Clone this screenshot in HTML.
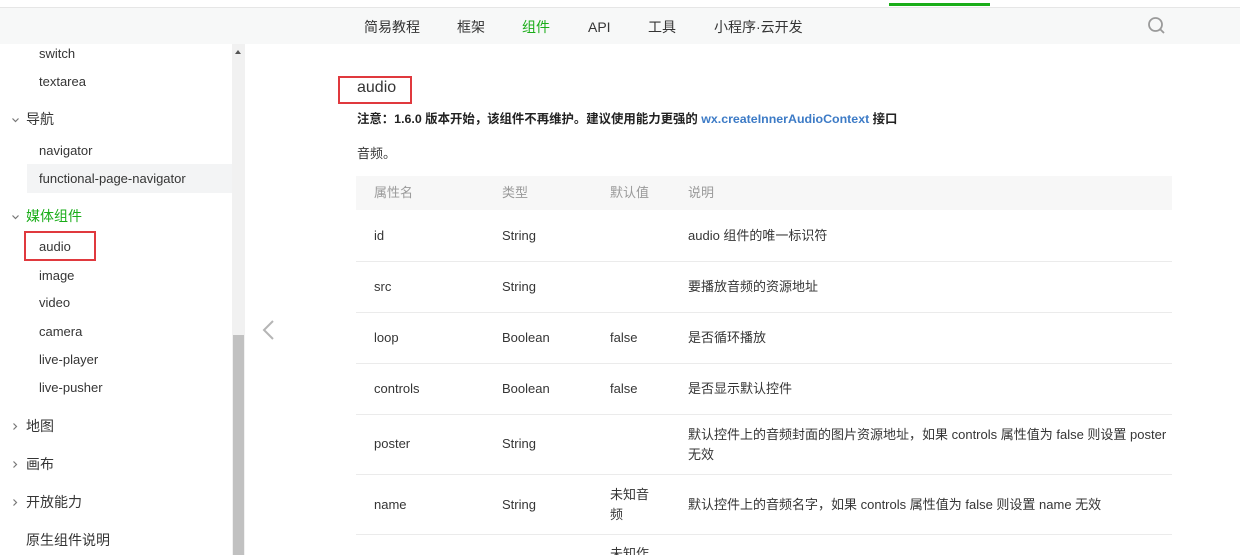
<!DOCTYPE html>
<html><head><meta charset="utf-8"><style>
*{margin:0;padding:0;box-sizing:border-box}
html,body{width:1240px;height:555px;overflow:hidden}
body{background:#fff;font-family:"Liberation Sans","Noto Sans CJK SC",sans-serif;color:#353535;position:relative}
.a{position:absolute;white-space:nowrap;line-height:18px}
.hdr{position:absolute;left:0;top:7px;width:1240px;height:37px;background:#f7f8f8;border-top:1px solid #e6e6e6}
.nav{font-size:14px;color:#353535;top:17px;line-height:20px}
.sb{font-size:13px;color:#353535}
.cat{font-size:14px;color:#353535;line-height:20px}
.td{font-size:13px;color:#353535}
.th{font-size:13px;color:#9a9a9a}
.line{position:absolute;left:356px;width:816px;height:1px;background:#ebebeb}
.chev{position:absolute;left:11px}
</style></head><body>
<div class="a" style="left:889px;top:3px;width:101px;height:3px;background:#1aad19"></div>
<div class="hdr"></div>
<div class="a nav" style="left:364px">简易教程</div>
<div class="a nav" style="left:457px">框架</div>
<div class="a nav" style="left:522px;color:#1aad19">组件</div>
<div class="a nav" style="left:588px">API</div>
<div class="a nav" style="left:648px">工具</div>
<div class="a nav" style="left:714px">小程序·云开发</div>
<svg class="a" style="left:1147px;top:16px" width="20" height="20" viewBox="0 0 20 20"><circle cx="8.5" cy="8.5" r="6.5" fill="none" stroke="#9a9a9a" stroke-width="1.8"/><path d="M13.2 13.2L17 17" stroke="#9a9a9a" stroke-width="1.8"/></svg>

<div class="a" style="left:232px;top:44px;width:13px;height:511px;background:#f1f1f1"></div>
<div class="a" style="left:233px;top:335px;width:11px;height:220px;background:#c1c1c1"></div>
<div class="a" style="left:235px;top:50px;width:0;height:0;border-left:3.5px solid transparent;border-right:3.5px solid transparent;border-bottom:4px solid #555"></div>
<div class="a" style="left:27px;top:164px;width:205px;height:29px;background:#f3f4f5"></div>
<div class="a sb" style="left:39px;top:45px">switch</div>
<div class="a sb" style="left:39px;top:73px">textarea</div>
<svg class="chev" style="top:116px" width="9" height="8" viewBox="0 0 9 8"><path d="M1.5 2.5L4.5 5.5L7.5 2.5" fill="none" stroke="#777" stroke-width="1.2"/></svg>
<div class="a cat" style="left:26px;top:109px">导航</div>
<div class="a sb" style="left:39px;top:142px">navigator</div>
<div class="a sb" style="left:39px;top:170px">functional-page-navigator</div>
<svg class="chev" style="top:213px" width="9" height="8" viewBox="0 0 9 8"><path d="M1.5 2.5L4.5 5.5L7.5 2.5" fill="none" stroke="#777" stroke-width="1.2"/></svg>
<div class="a cat" style="left:26px;top:206px;color:#1aad19">媒体组件</div>
<div class="a" style="left:24px;top:231px;width:72px;height:30px;border:2px solid #e0393e"></div>
<div class="a sb" style="left:39px;top:238px">audio</div>
<div class="a sb" style="left:39px;top:267px">image</div>
<div class="a sb" style="left:39px;top:294px">video</div>
<div class="a sb" style="left:39px;top:323px">camera</div>
<div class="a sb" style="left:39px;top:351px">live-player</div>
<div class="a sb" style="left:39px;top:379px">live-pusher</div>
<svg class="chev" style="top:422px" width="8" height="9" viewBox="0 0 8 9"><path d="M2.5 1.5L5.5 4.5L2.5 7.5" fill="none" stroke="#777" stroke-width="1.2"/></svg>
<div class="a cat" style="left:26px;top:416px">地图</div>
<svg class="chev" style="top:460px" width="8" height="9" viewBox="0 0 8 9"><path d="M2.5 1.5L5.5 4.5L2.5 7.5" fill="none" stroke="#777" stroke-width="1.2"/></svg>
<div class="a cat" style="left:26px;top:454px">画布</div>
<svg class="chev" style="top:498px" width="8" height="9" viewBox="0 0 8 9"><path d="M2.5 1.5L5.5 4.5L2.5 7.5" fill="none" stroke="#777" stroke-width="1.2"/></svg>
<div class="a cat" style="left:26px;top:492px">开放能力</div>
<div class="a cat" style="left:26px;top:530px">原生组件说明</div>

<svg class="a" style="left:261px;top:319px" width="14" height="22" viewBox="0 0 14 22"><path d="M12 2L3 11l9 9" fill="none" stroke="#b5b5b5" stroke-width="2"/></svg>

<div class="a" style="left:338px;top:76px;width:74px;height:28px;border:2px solid #e0393e"></div>
<div class="a" style="left:357px;top:78px;font-size:16px;color:#353535;line-height:20px">audio</div>
<div class="a" style="left:357px;top:110px;font-size:12.4px;font-weight:bold;color:#222">注意：1.6.0 版本开始，该组件不再维护。建议使用能力更强的 <span style="color:#3d7bc6">wx.createInnerAudioContext</span> 接口</div>
<div class="a" style="left:357px;top:145px;font-size:13px">音频。</div>

<div class="a" style="left:356px;top:176px;width:816px;height:34px;background:#f7f7f7"></div>
<div class="a th" style="left:374px;top:184px">属性名</div>
<div class="a th" style="left:502px;top:184px">类型</div>
<div class="a th" style="left:610px;top:184px">默认值</div>
<div class="a th" style="left:688px;top:184px">说明</div>

<div class="a td" style="left:374px;top:227px">id</div><div class="a td" style="left:502px;top:227px">String</div><div class="a td" style="left:688px;top:227px">audio 组件的唯一标识符</div>
<div class="line" style="top:261px"></div>
<div class="a td" style="left:374px;top:278px">src</div><div class="a td" style="left:502px;top:278px">String</div><div class="a td" style="left:688px;top:278px">要播放音频的资源地址</div>
<div class="line" style="top:312px"></div>
<div class="a td" style="left:374px;top:329px">loop</div><div class="a td" style="left:502px;top:329px">Boolean</div><div class="a td" style="left:610px;top:329px">false</div><div class="a td" style="left:688px;top:329px">是否循环播放</div>
<div class="line" style="top:363px"></div>
<div class="a td" style="left:374px;top:380px">controls</div><div class="a td" style="left:502px;top:380px">Boolean</div><div class="a td" style="left:610px;top:380px">false</div><div class="a td" style="left:688px;top:380px">是否显示默认控件</div>
<div class="line" style="top:414px"></div>
<div class="a td" style="left:374px;top:435px">poster</div><div class="a td" style="left:502px;top:435px">String</div>
<div class="a td" style="left:688px;top:425px;line-height:20px">默认控件上的音频封面的图片资源地址，如果 controls 属性值为 false 则设置 poster<br>无效</div>
<div class="line" style="top:474px"></div>
<div class="a td" style="left:374px;top:496px">name</div><div class="a td" style="left:502px;top:496px">String</div>
<div class="a td" style="left:610px;top:485px;line-height:20px">未知音<br>频</div>
<div class="a td" style="left:688px;top:496px">默认控件上的音频名字，如果 controls 属性值为 false 则设置 name 无效</div>
<div class="line" style="top:534px"></div>
<div class="a td" style="left:610px;top:545px">未知作</div>
</body></html>
